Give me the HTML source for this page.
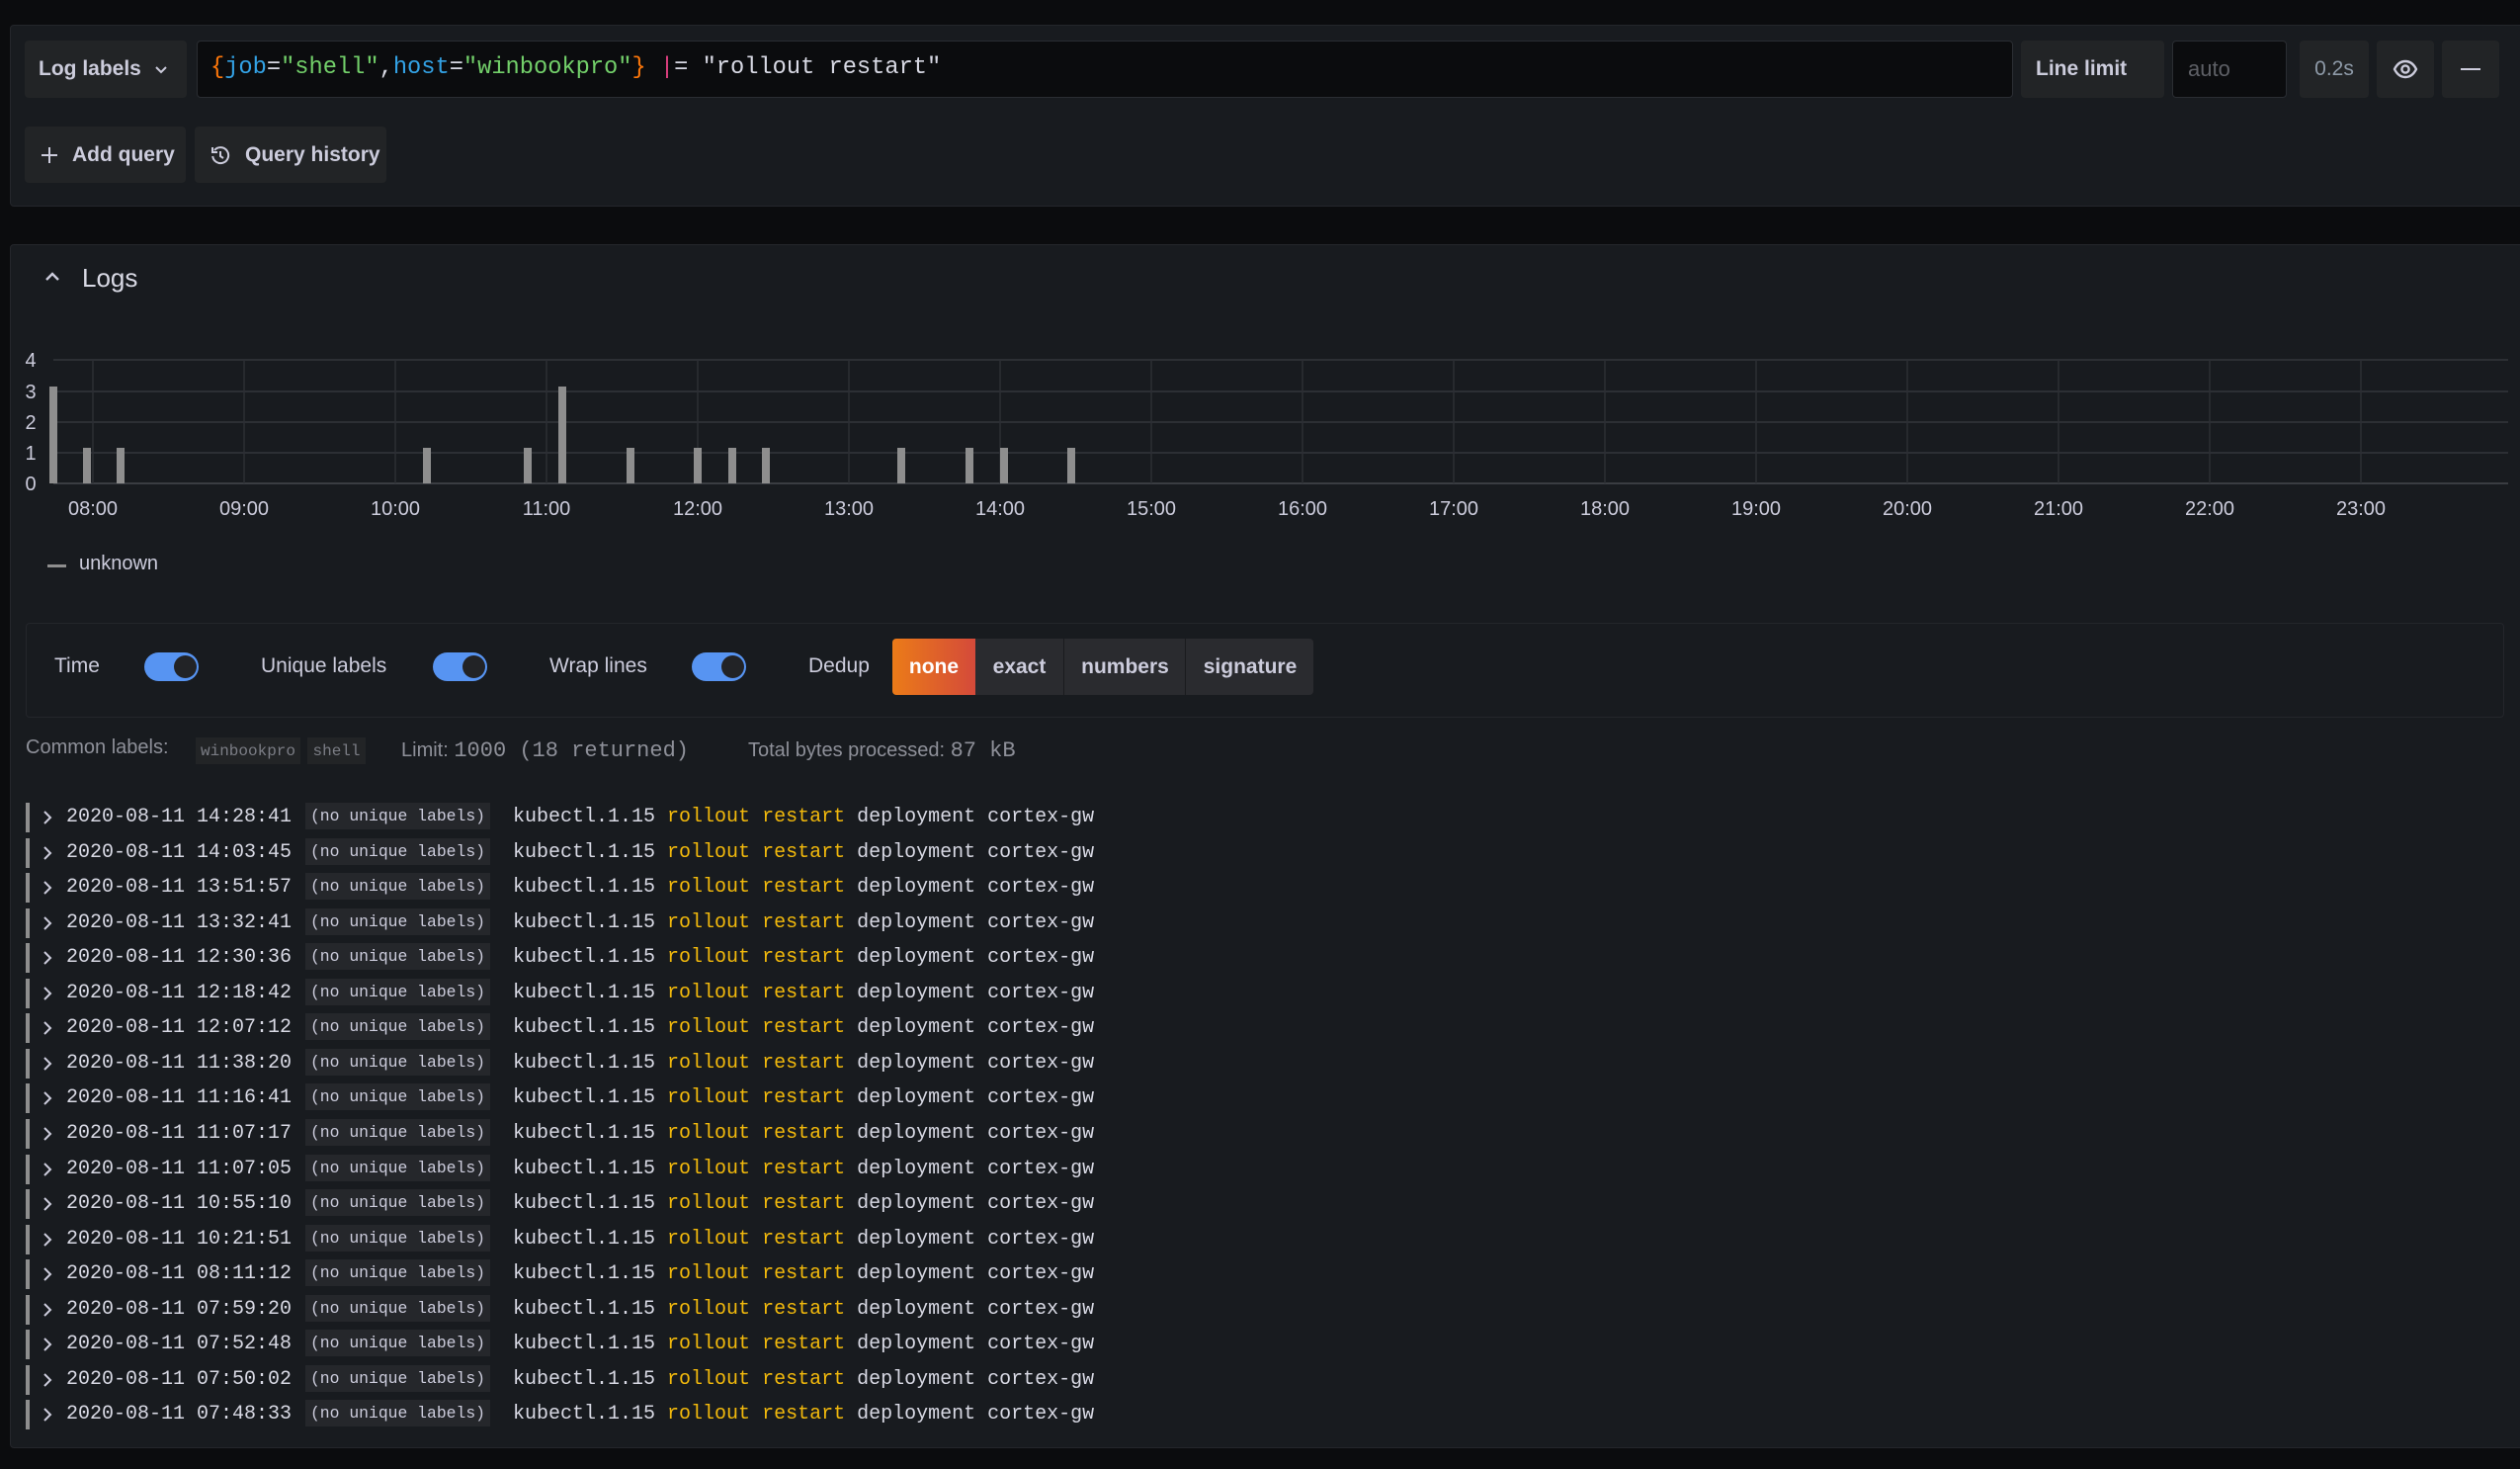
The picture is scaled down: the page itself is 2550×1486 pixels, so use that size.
<!DOCTYPE html>
<html><head><meta charset="utf-8"><style>
*{box-sizing:border-box;margin:0;padding:0}
body{width:2550px;height:1486px;background:#0b0c0e;position:relative;overflow:hidden;font-family:"Liberation Sans",sans-serif;color:#ccccdc}
.a{position:absolute}
.panel{position:absolute;background:#181b1f;border:1px solid #24262b;border-radius:4px}
.btn{position:absolute;background:#222426;border-radius:4px;display:flex;align-items:center;font-size:21px;font-weight:bold;color:#ccccdc}
.mono{font-family:"Liberation Mono",monospace}
.row{position:absolute;left:26px;width:1100px;height:30px}
.row .bar{position:absolute;left:0;top:0;width:4px;height:30px;background:#8e8e8e}
.row .chev{position:absolute;left:17px;top:7px}
.row .ts{position:absolute;left:41px;top:3px;font-size:20px;color:#d8d9e4;white-space:pre}
.row .lb{position:absolute;left:283px;top:0;width:187px;height:27px;background:#25272b;font-size:16.4px;color:#ccccdc;display:flex;align-items:center;justify-content:center;white-space:pre}
.row .msg{position:absolute;left:493px;top:3px;font-size:20px;color:#d8d9e4;white-space:pre}
.y{color:#f2b90c}
.tg{position:absolute;width:55px;height:29px;border-radius:15px;background:#5794f2}
.tg::after{content:"";position:absolute;right:2px;top:3px;width:23px;height:23px;border-radius:50%;background:#222326}
.lab{position:absolute;font-size:21px;color:#ccccdc}
</style></head><body>

<div class="panel" style="left:10px;top:25px;width:2545px;height:184px"></div>
<div class="btn" style="left:25px;top:41px;width:164px;height:58px;padding-left:14px">Log labels
<svg width="16" height="16" viewBox="0 0 16 16" style="margin-left:12px"><path d="M3 6l5 5 5-5" fill="none" stroke="#ccccdc" stroke-width="2"/></svg></div>
<div class="a" style="left:199px;top:41px;width:1838px;height:58px;background:#0b0c0e;border:1px solid #2a2d32;border-radius:4px"></div>
<div class="a mono" style="left:213px;top:55px;font-size:23.7px;white-space:pre;color:#d8d9e4"><span style="color:#ff780a">{</span><span style="color:#33a2e5">job</span>=<span style="color:#73d06a">"shell"</span>,<span style="color:#33a2e5">host</span>=<span style="color:#73d06a">"winbookpro"</span><span style="color:#ff780a">}</span> <span style="color:#e04080">|</span>= "rollout restart"</div>
<div class="btn" style="left:2045px;top:41px;width:145px;height:58px;padding-left:15px">Line limit</div>
<div class="a" style="left:2198px;top:41px;width:116px;height:58px;background:#0b0c0e;border:1px solid #2a2d32;border-radius:4px;font-size:22px;color:#5e6066;padding:15px 0 0 15px">auto</div>
<div class="btn" style="left:2327px;top:41px;width:70px;height:58px;justify-content:center;font-weight:normal;color:#8e9aa8">0.2s</div>
<div class="btn" style="left:2405px;top:41px;width:58px;height:58px;justify-content:center">
<svg width="26" height="20" viewBox="0 0 26 20"><path d="M2 10C5 4 9 2 13 2s8 2 11 8c-3 6-7 8-11 8S5 16 2 10z" fill="none" stroke="#ccccdc" stroke-width="2.4"/><circle cx="13" cy="10" r="3.6" fill="none" stroke="#ccccdc" stroke-width="2.4"/></svg></div>
<div class="btn" style="left:2471px;top:41px;width:58px;height:58px;justify-content:center"><div style="width:20px;height:2.5px;background:#ccccdc"></div></div>

<div class="btn" style="left:25px;top:128px;width:163px;height:57px;padding-left:16px">
<svg width="18" height="18" viewBox="0 0 18 18" style="margin-right:14px"><path d="M9 1v16M1 9h16" stroke="#ccccdc" stroke-width="2"/></svg>Add query</div>
<div class="btn" style="left:197px;top:128px;width:194px;height:57px;padding-left:16px">
<svg width="20" height="20" viewBox="0 0 20 20" style="margin-right:15px"><path d="M4 5A8 8 0 1 1 2.2 11" fill="none" stroke="#ccccdc" stroke-width="2"/><path d="M2 2v5h5" fill="none" stroke="#ccccdc" stroke-width="2"/><path d="M10 6v5l3 2" fill="none" stroke="#ccccdc" stroke-width="2"/></svg>Query history</div>

<div class="panel" style="left:10px;top:247px;width:2545px;height:1218px"></div>
<svg class="a" style="left:45px;top:273px" width="16" height="12" viewBox="0 0 16 12"><path d="M2 10l6-6 6 6" fill="none" stroke="#ccccdc" stroke-width="2.4"/></svg>
<div class="a" style="left:83px;top:266px;font-size:26px;color:#d8d9e4">Logs</div>

<svg class="a" style="left:0;top:340px" width="2550" height="200">
<g stroke="#2c2f34" stroke-width="2">
<line x1="54" y1="24" x2="2538" y2="24"/><line x1="54" y1="56" x2="2538" y2="56"/><line x1="54" y1="87" x2="2538" y2="87"/><line x1="54" y1="118" x2="2538" y2="118"/><line x1="54" y1="149" x2="2538" y2="149" stroke="#3a3d42"/>
</g>
<g stroke="#2c2f34" stroke-width="1.5">
<line x1="94" y1="24" x2="94" y2="149"/><line x1="247" y1="24" x2="247" y2="149"/><line x1="400" y1="24" x2="400" y2="149"/><line x1="553" y1="24" x2="553" y2="149"/><line x1="706" y1="24" x2="706" y2="149"/><line x1="859" y1="24" x2="859" y2="149"/><line x1="1012" y1="24" x2="1012" y2="149"/><line x1="1165" y1="24" x2="1165" y2="149"/><line x1="1318" y1="24" x2="1318" y2="149"/><line x1="1471" y1="24" x2="1471" y2="149"/><line x1="1624" y1="24" x2="1624" y2="149"/><line x1="1777" y1="24" x2="1777" y2="149"/><line x1="1930" y1="24" x2="1930" y2="149"/><line x1="2083" y1="24" x2="2083" y2="149"/><line x1="2236" y1="24" x2="2236" y2="149"/><line x1="2389" y1="24" x2="2389" y2="149"/>
</g>
<g fill="#8e8e8e">
<rect x="50" y="51" width="8" height="98"/><rect x="84" y="113" width="8" height="36"/><rect x="118" y="113" width="8" height="36"/><rect x="428" y="113" width="8" height="36"/><rect x="530" y="113" width="8" height="36"/><rect x="565" y="51" width="8" height="98"/><rect x="634" y="113" width="8" height="36"/><rect x="702" y="113" width="8" height="36"/><rect x="737" y="113" width="8" height="36"/><rect x="771" y="113" width="8" height="36"/><rect x="908" y="113" width="8" height="36"/><rect x="977" y="113" width="8" height="36"/><rect x="1012" y="113" width="8" height="36"/><rect x="1080" y="113" width="8" height="36"/>
</g>
<g fill="#ccccdc" font-family="Liberation Sans,sans-serif" font-size="20" text-anchor="middle">
<text x="31" y="31">4</text><text x="31" y="63">3</text><text x="31" y="94">2</text><text x="31" y="125">1</text><text x="31" y="156">0</text>
<text x="94" y="181">08:00</text><text x="247" y="181">09:00</text><text x="400" y="181">10:00</text><text x="553" y="181">11:00</text><text x="706" y="181">12:00</text><text x="859" y="181">13:00</text><text x="1012" y="181">14:00</text><text x="1165" y="181">15:00</text><text x="1318" y="181">16:00</text><text x="1471" y="181">17:00</text><text x="1624" y="181">18:00</text><text x="1777" y="181">19:00</text><text x="1930" y="181">20:00</text><text x="2083" y="181">21:00</text><text x="2236" y="181">22:00</text><text x="2389" y="181">23:00</text>
</g>
</svg>
<div class="a" style="left:48px;top:571px;width:19px;height:3px;background:#8e8e8e"></div>
<div class="a" style="left:80px;top:559px;font-size:20px;color:#ccccdc">unknown</div>

<div class="a" style="left:26px;top:630px;width:2508px;height:96px;border:1px solid #24262b;border-radius:4px"></div>
<div class="lab" style="left:55px;top:662px">Time</div><div class="tg" style="left:146px;top:660px"></div>
<div class="lab" style="left:264px;top:662px">Unique labels</div><div class="tg" style="left:438px;top:660px"></div>
<div class="lab" style="left:556px;top:662px">Wrap lines</div><div class="tg" style="left:700px;top:660px"></div>
<div class="lab" style="left:818px;top:662px">Dedup</div>
<div class="a" style="left:903px;top:646px;width:426px;height:57px;background:#2a2b2f;border-radius:4px"></div>
<div class="a" style="left:903px;top:646px;width:84px;height:57px;background:linear-gradient(90deg,#eb7b18,#d44a3a);border-radius:4px 0 0 4px;color:#fff;font-size:21px;font-weight:bold;display:flex;align-items:center;justify-content:center">none</div>
<div class="a" style="left:987px;top:646px;width:90px;height:57px;color:#ccccdc;font-size:21px;font-weight:bold;display:flex;align-items:center;justify-content:center;border-right:1px solid #1a1b1e">exact</div>
<div class="a" style="left:1078px;top:646px;width:122px;height:57px;color:#ccccdc;font-size:21px;font-weight:bold;display:flex;align-items:center;justify-content:center;border-right:1px solid #1a1b1e">numbers</div>
<div class="a" style="left:1201px;top:646px;width:128px;height:57px;color:#ccccdc;font-size:21px;font-weight:bold;display:flex;align-items:center;justify-content:center">signature</div>

<div class="a" style="left:26px;top:745px;font-size:20px;color:#8e9099">Common labels:</div>
<div class="a mono" style="left:198px;top:746px;width:106px;height:27px;background:#222426;font-size:16px;color:#7b7d85;display:flex;align-items:center;justify-content:center">winbookpro</div>
<div class="a mono" style="left:311px;top:746px;width:59px;height:27px;background:#222426;font-size:16px;color:#7b7d85;display:flex;align-items:center;justify-content:center">shell</div>
<div class="a" style="left:406px;top:747px;font-size:20px;color:#8e9099;white-space:pre">Limit: <span class="mono" style="font-size:22px">1000 (18 returned)</span></div>
<div class="a" style="left:757px;top:747px;font-size:20px;color:#8e9099;white-space:pre">Total bytes processed: <span class="mono" style="font-size:22px">87 kB</span></div>

<div class="row" style="top:812px"><div class="bar"></div><svg class="chev" width="10" height="16" viewBox="0 0 10 16"><path d="M2 2l6 6-6 6" fill="none" stroke="#ccccdc" stroke-width="2"/></svg><span class="ts mono">2020-08-11 14:28:41</span><span class="lb mono">(no unique labels)</span><span class="msg mono">kubectl.1.15 <span class="y">rollout</span> <span class="y">restart</span> deployment cortex-gw</span></div>
<div class="row" style="top:848px"><div class="bar"></div><svg class="chev" width="10" height="16" viewBox="0 0 10 16"><path d="M2 2l6 6-6 6" fill="none" stroke="#ccccdc" stroke-width="2"/></svg><span class="ts mono">2020-08-11 14:03:45</span><span class="lb mono">(no unique labels)</span><span class="msg mono">kubectl.1.15 <span class="y">rollout</span> <span class="y">restart</span> deployment cortex-gw</span></div>
<div class="row" style="top:883px"><div class="bar"></div><svg class="chev" width="10" height="16" viewBox="0 0 10 16"><path d="M2 2l6 6-6 6" fill="none" stroke="#ccccdc" stroke-width="2"/></svg><span class="ts mono">2020-08-11 13:51:57</span><span class="lb mono">(no unique labels)</span><span class="msg mono">kubectl.1.15 <span class="y">rollout</span> <span class="y">restart</span> deployment cortex-gw</span></div>
<div class="row" style="top:919px"><div class="bar"></div><svg class="chev" width="10" height="16" viewBox="0 0 10 16"><path d="M2 2l6 6-6 6" fill="none" stroke="#ccccdc" stroke-width="2"/></svg><span class="ts mono">2020-08-11 13:32:41</span><span class="lb mono">(no unique labels)</span><span class="msg mono">kubectl.1.15 <span class="y">rollout</span> <span class="y">restart</span> deployment cortex-gw</span></div>
<div class="row" style="top:954px"><div class="bar"></div><svg class="chev" width="10" height="16" viewBox="0 0 10 16"><path d="M2 2l6 6-6 6" fill="none" stroke="#ccccdc" stroke-width="2"/></svg><span class="ts mono">2020-08-11 12:30:36</span><span class="lb mono">(no unique labels)</span><span class="msg mono">kubectl.1.15 <span class="y">rollout</span> <span class="y">restart</span> deployment cortex-gw</span></div>
<div class="row" style="top:990px"><div class="bar"></div><svg class="chev" width="10" height="16" viewBox="0 0 10 16"><path d="M2 2l6 6-6 6" fill="none" stroke="#ccccdc" stroke-width="2"/></svg><span class="ts mono">2020-08-11 12:18:42</span><span class="lb mono">(no unique labels)</span><span class="msg mono">kubectl.1.15 <span class="y">rollout</span> <span class="y">restart</span> deployment cortex-gw</span></div>
<div class="row" style="top:1025px"><div class="bar"></div><svg class="chev" width="10" height="16" viewBox="0 0 10 16"><path d="M2 2l6 6-6 6" fill="none" stroke="#ccccdc" stroke-width="2"/></svg><span class="ts mono">2020-08-11 12:07:12</span><span class="lb mono">(no unique labels)</span><span class="msg mono">kubectl.1.15 <span class="y">rollout</span> <span class="y">restart</span> deployment cortex-gw</span></div>
<div class="row" style="top:1061px"><div class="bar"></div><svg class="chev" width="10" height="16" viewBox="0 0 10 16"><path d="M2 2l6 6-6 6" fill="none" stroke="#ccccdc" stroke-width="2"/></svg><span class="ts mono">2020-08-11 11:38:20</span><span class="lb mono">(no unique labels)</span><span class="msg mono">kubectl.1.15 <span class="y">rollout</span> <span class="y">restart</span> deployment cortex-gw</span></div>
<div class="row" style="top:1096px"><div class="bar"></div><svg class="chev" width="10" height="16" viewBox="0 0 10 16"><path d="M2 2l6 6-6 6" fill="none" stroke="#ccccdc" stroke-width="2"/></svg><span class="ts mono">2020-08-11 11:16:41</span><span class="lb mono">(no unique labels)</span><span class="msg mono">kubectl.1.15 <span class="y">rollout</span> <span class="y">restart</span> deployment cortex-gw</span></div>
<div class="row" style="top:1132px"><div class="bar"></div><svg class="chev" width="10" height="16" viewBox="0 0 10 16"><path d="M2 2l6 6-6 6" fill="none" stroke="#ccccdc" stroke-width="2"/></svg><span class="ts mono">2020-08-11 11:07:17</span><span class="lb mono">(no unique labels)</span><span class="msg mono">kubectl.1.15 <span class="y">rollout</span> <span class="y">restart</span> deployment cortex-gw</span></div>
<div class="row" style="top:1168px"><div class="bar"></div><svg class="chev" width="10" height="16" viewBox="0 0 10 16"><path d="M2 2l6 6-6 6" fill="none" stroke="#ccccdc" stroke-width="2"/></svg><span class="ts mono">2020-08-11 11:07:05</span><span class="lb mono">(no unique labels)</span><span class="msg mono">kubectl.1.15 <span class="y">rollout</span> <span class="y">restart</span> deployment cortex-gw</span></div>
<div class="row" style="top:1203px"><div class="bar"></div><svg class="chev" width="10" height="16" viewBox="0 0 10 16"><path d="M2 2l6 6-6 6" fill="none" stroke="#ccccdc" stroke-width="2"/></svg><span class="ts mono">2020-08-11 10:55:10</span><span class="lb mono">(no unique labels)</span><span class="msg mono">kubectl.1.15 <span class="y">rollout</span> <span class="y">restart</span> deployment cortex-gw</span></div>
<div class="row" style="top:1239px"><div class="bar"></div><svg class="chev" width="10" height="16" viewBox="0 0 10 16"><path d="M2 2l6 6-6 6" fill="none" stroke="#ccccdc" stroke-width="2"/></svg><span class="ts mono">2020-08-11 10:21:51</span><span class="lb mono">(no unique labels)</span><span class="msg mono">kubectl.1.15 <span class="y">rollout</span> <span class="y">restart</span> deployment cortex-gw</span></div>
<div class="row" style="top:1274px"><div class="bar"></div><svg class="chev" width="10" height="16" viewBox="0 0 10 16"><path d="M2 2l6 6-6 6" fill="none" stroke="#ccccdc" stroke-width="2"/></svg><span class="ts mono">2020-08-11 08:11:12</span><span class="lb mono">(no unique labels)</span><span class="msg mono">kubectl.1.15 <span class="y">rollout</span> <span class="y">restart</span> deployment cortex-gw</span></div>
<div class="row" style="top:1310px"><div class="bar"></div><svg class="chev" width="10" height="16" viewBox="0 0 10 16"><path d="M2 2l6 6-6 6" fill="none" stroke="#ccccdc" stroke-width="2"/></svg><span class="ts mono">2020-08-11 07:59:20</span><span class="lb mono">(no unique labels)</span><span class="msg mono">kubectl.1.15 <span class="y">rollout</span> <span class="y">restart</span> deployment cortex-gw</span></div>
<div class="row" style="top:1345px"><div class="bar"></div><svg class="chev" width="10" height="16" viewBox="0 0 10 16"><path d="M2 2l6 6-6 6" fill="none" stroke="#ccccdc" stroke-width="2"/></svg><span class="ts mono">2020-08-11 07:52:48</span><span class="lb mono">(no unique labels)</span><span class="msg mono">kubectl.1.15 <span class="y">rollout</span> <span class="y">restart</span> deployment cortex-gw</span></div>
<div class="row" style="top:1381px"><div class="bar"></div><svg class="chev" width="10" height="16" viewBox="0 0 10 16"><path d="M2 2l6 6-6 6" fill="none" stroke="#ccccdc" stroke-width="2"/></svg><span class="ts mono">2020-08-11 07:50:02</span><span class="lb mono">(no unique labels)</span><span class="msg mono">kubectl.1.15 <span class="y">rollout</span> <span class="y">restart</span> deployment cortex-gw</span></div>
<div class="row" style="top:1416px"><div class="bar"></div><svg class="chev" width="10" height="16" viewBox="0 0 10 16"><path d="M2 2l6 6-6 6" fill="none" stroke="#ccccdc" stroke-width="2"/></svg><span class="ts mono">2020-08-11 07:48:33</span><span class="lb mono">(no unique labels)</span><span class="msg mono">kubectl.1.15 <span class="y">rollout</span> <span class="y">restart</span> deployment cortex-gw</span></div>
</body></html>
